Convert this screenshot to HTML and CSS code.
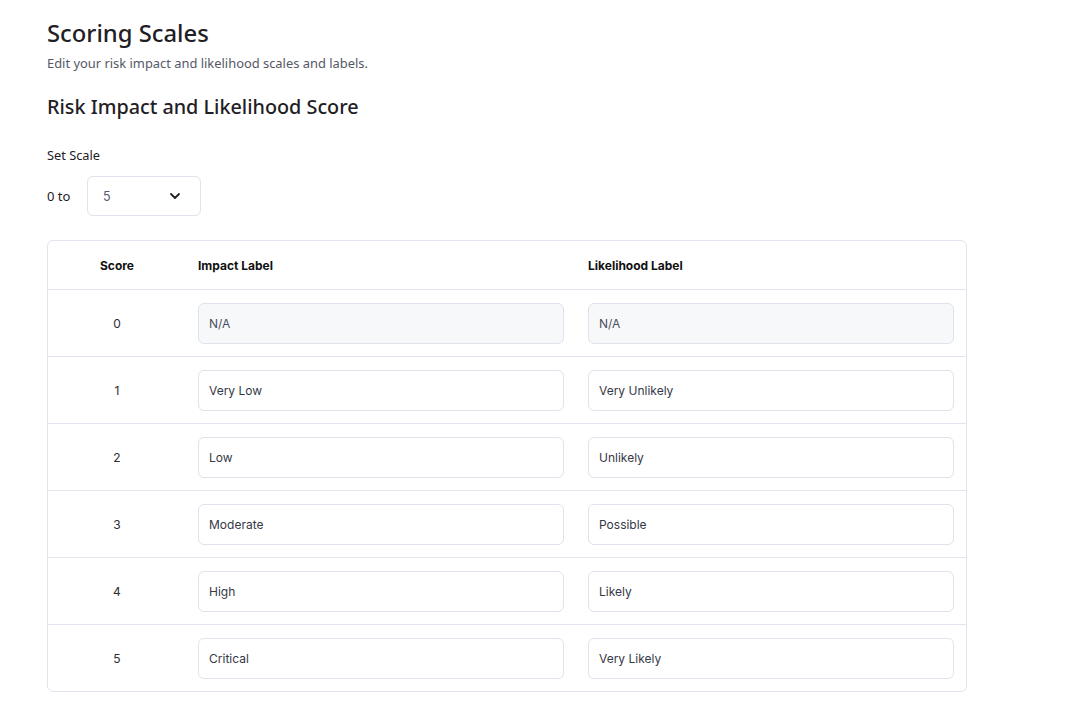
FILE: index.html
```html
<!DOCTYPE html>
<html>
<head>
<meta charset="utf-8">
<link rel="stylesheet" href="styles.css">
</head>
<body>
<div class="page">
  <h1 class="title">Scoring Scales</h1>
  <p class="subtitle">Edit your risk impact and likelihood scales and labels.</p>
  <h2 class="section-title">Risk Impact and Likelihood Score</h2>
  <div class="scale-label">Set Scale</div>
  <div class="scale-row">
    <span class="scale-prefix">0 to</span>
    <div class="select">
      <span class="select-value">5</span>
      <svg class="chevron" width="12" height="8" viewBox="0 0 12 8"><path d="M2 2 L6 6 L10 2" fill="none" stroke="#222" stroke-width="1.8" stroke-linecap="round" stroke-linejoin="round"/></svg>
    </div>
  </div>
  <div class="table">
    <div class="row head">
      <div class="cell score">Score</div>
      <div class="cell">Impact Label</div>
      <div class="cell">Likelihood Label</div>
    </div>
    <div class="row">
      <div class="cell score">0</div>
      <div class="cell"><div class="input disabled">N/A</div></div>
      <div class="cell"><div class="input disabled">N/A</div></div>
    </div>
    <div class="row">
      <div class="cell score">1</div>
      <div class="cell"><div class="input">Very Low</div></div>
      <div class="cell"><div class="input">Very Unlikely</div></div>
    </div>
    <div class="row">
      <div class="cell score">2</div>
      <div class="cell"><div class="input">Low</div></div>
      <div class="cell"><div class="input">Unlikely</div></div>
    </div>
    <div class="row">
      <div class="cell score">3</div>
      <div class="cell"><div class="input">Moderate</div></div>
      <div class="cell"><div class="input">Possible</div></div>
    </div>
    <div class="row">
      <div class="cell score">4</div>
      <div class="cell"><div class="input">High</div></div>
      <div class="cell"><div class="input">Likely</div></div>
    </div>
    <div class="row">
      <div class="cell score">5</div>
      <div class="cell"><div class="input">Critical</div></div>
      <div class="cell"><div class="input">Very Likely</div></div>
    </div>
  </div>
</div>
</body>
</html>
```
FILE: styles.css
```css
html, body {
  margin: 0;
  padding: 0;
  background: #ffffff;
}
.page {
  padding: 17px 0 0 47px;
  width: 920px;
  font-family: "Noto Sans", "Open Sans", sans-serif;
  color: #1f2024;
}
.title {
  margin: 0;
  font-size: 23.8px;
  font-weight: 500;
  line-height: 32px;
}
.subtitle {
  margin: 4px 0 0 0;
  font-size: 12.9px;
  line-height: 20px;
  color: #555866;
}
.section-title {
  margin: 20px 0 0 0;
  font-size: 19.8px;
  font-weight: 500;
  line-height: 28px;
}
.scale-label {
  margin-top: 25px;
  font-size: 12.8px;
  line-height: 18px;
}
.scale-row {
  margin-top: 12px;
  display: flex;
  align-items: center;
  gap: 12px;
}
.scale-prefix {
  font-size: 13px;
  width: 28px;
}
.select {
  box-sizing: border-box;
  width: 114px;
  height: 40px;
  border: 1px solid #e1e3ec;
  border-radius: 6px;
  display: flex;
  align-items: center;
  justify-content: space-between;
  padding: 0 19px 0 15px;
  font-family: "Inter", sans-serif;
  font-size: 12.5px;
  color: #555a70;
}
.table {
  margin-top: 24px;
  border: 1px solid #e3e5ee;
  border-radius: 6px;
  font-family: "Inter", sans-serif;
  font-size: 12px;
  color: #2c2d33;
}
.row {
  display: grid;
  grid-template-columns: 138px 390px 390px;
  border-top: 1px solid #e3e5ee;
  height: 66px;
  align-items: center;
}
.row.head {
  border-top: none;
  height: 48px;
  font-weight: 700;
  color: #111;
}
.cell {
  padding: 0 12px;
}
.cell.score {
  text-align: center;
}
.input {
  box-sizing: border-box;
  height: 41px;
  border: 1px solid #e1e3ec;
  border-radius: 6px;
  display: flex;
  align-items: center;
  padding: 0 10px;
  font-size: 12px;
  color: #363846;
  background: #fff;
}
.input.disabled {
  background: #f7f8fa;
  color: #4b4f60;
}
```
